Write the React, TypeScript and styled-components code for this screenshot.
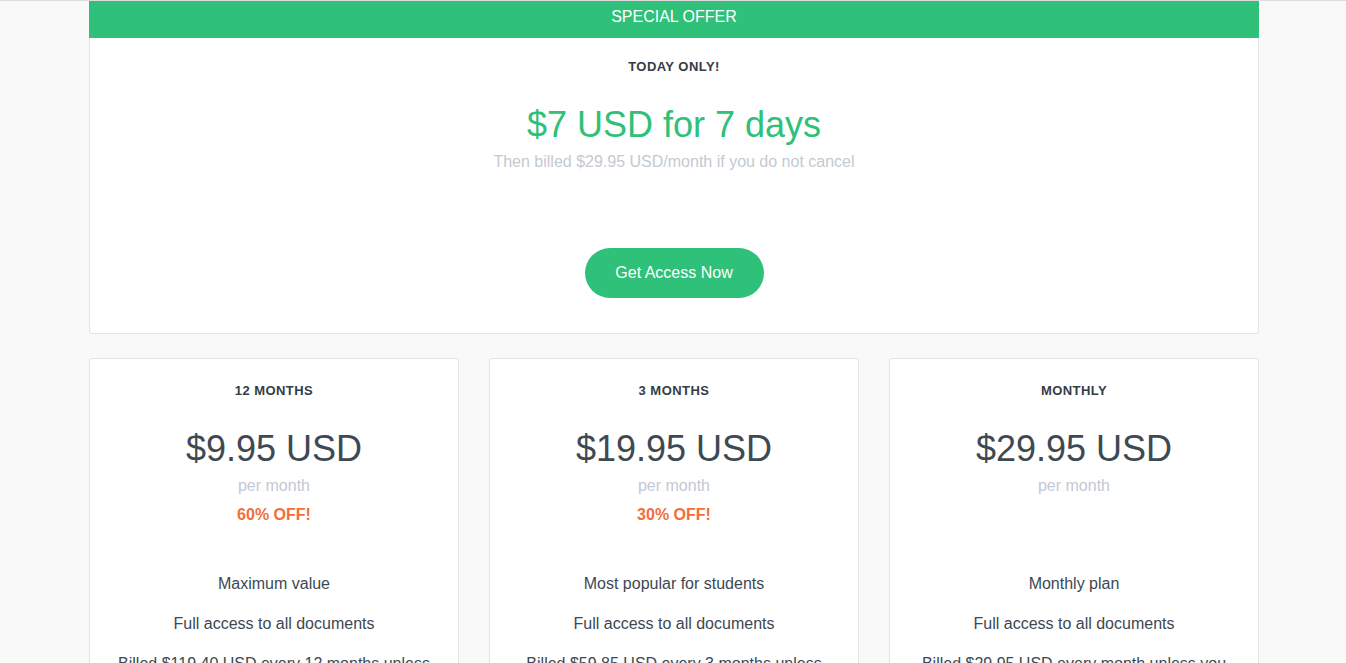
import styled, { createGlobalStyle } from "styled-components";

const GlobalStyle = createGlobalStyle`
  html, body {
    margin: 0;
    padding: 0;
    background: #f9f9f9;
    font-family: "Liberation Sans", Arial, sans-serif;
    color: #3d4852;
  }
  body {
    border-top: 1px solid #dcdcdc;
  }
`;

const Page = styled.div`
  width: 1170px;
  margin-left: calc(50% - 584px);
  padding-bottom: 40px;
`;

const Panel = styled.div`
  background: #fff;
  border: 1px solid #e3e3e3;
  border-radius: 3px;
  box-sizing: border-box;
  text-align: center;
`;

const OfferPanel = styled(Panel)`
  border-top: none;
  border-radius: 0 0 3px 3px;
  padding-bottom: 35px;
`;

const Banner = styled.div`
  background: #2fc079;
  color: #fff;
  font-size: 16px;
  line-height: 20px;
  height: 37px;
  padding-top: 6px;
  box-sizing: border-box;
  margin: 0 -1px;
`;

const Eyebrow = styled.div<{ $top: number }>`
  font-size: 13px;
  font-weight: 700;
  letter-spacing: 0.45px;
  line-height: 18px;
  color: #333d47;
  margin-top: ${(p) => p.$top}px;
`;

const Price = styled.div<{ $green?: boolean }>`
  font-size: 36px;
  line-height: 40px;
  margin-top: 29px;
  color: ${(p) => (p.$green ? "#2fc079" : "#3e4953")};
`;

const Muted = styled.div<{ $top: number }>`
  font-size: 16px;
  line-height: 20px;
  color: #c3cad2;
  margin-top: ${(p) => p.$top}px;
`;

const CtaButton = styled.button`
  display: inline-block;
  margin-top: 76px;
  width: 179px;
  height: 50px;
  border: none;
  border-radius: 25px;
  background: #2fc079;
  color: #fff;
  font-family: inherit;
  font-size: 16px;
  cursor: pointer;
`;

const Plans = styled.div`
  display: grid;
  grid-template-columns: repeat(3, 370px);
  gap: 30px;
  margin-top: 24px;
`;

const PlanCard = styled(Panel)`
  padding: 23px 24px 30px;
`;

const Discount = styled.div`
  font-size: 16px;
  font-weight: 700;
  line-height: 20px;
  height: 20px;
  color: #f26d3a;
  margin-top: 9px;
`;

const Features = styled.div`
  margin-top: 49px;
  display: flex;
  flex-direction: column;
  gap: 20px;
  font-size: 16px;
  line-height: 20px;
`;

type Plan = {
  title: string;
  price: string;
  off?: string;
  tagline: string;
  billing: string;
};

const plans: Plan[] = [
  {
    title: "12 MONTHS",
    price: "$9.95 USD",
    off: "60% OFF!",
    tagline: "Maximum value",
    billing: "Billed $119.40 USD every 12 months unless you cancel",
  },
  {
    title: "3 MONTHS",
    price: "$19.95 USD",
    off: "30% OFF!",
    tagline: "Most popular for students",
    billing: "Billed $59.85 USD every 3 months unless you cancel",
  },
  {
    title: "MONTHLY",
    price: "$29.95 USD",
    tagline: "Monthly plan",
    billing: "Billed $29.95 USD every month unless you cancel",
  },
];

export default function App() {
  return (
    <Page>
      <GlobalStyle />
      <OfferPanel>
        <Banner>SPECIAL OFFER</Banner>
        <Eyebrow $top={20}>TODAY ONLY!</Eyebrow>
        <Price $green>$7 USD for 7 days</Price>
        <Muted $top={7}>Then billed $29.95 USD/month if you do not cancel</Muted>
        <CtaButton>Get Access Now</CtaButton>
      </OfferPanel>
      <Plans>
        {plans.map((plan) => (
          <PlanCard key={plan.title}>
            <Eyebrow $top={0}>{plan.title}</Eyebrow>
            <Price>{plan.price}</Price>
            <Muted $top={7}>per month</Muted>
            <Discount>{plan.off}</Discount>
            <Features>
              <div>{plan.tagline}</div>
              <div>Full access to all documents</div>
              <div>{plan.billing}</div>
            </Features>
          </PlanCard>
        ))}
      </Plans>
    </Page>
  );
}
